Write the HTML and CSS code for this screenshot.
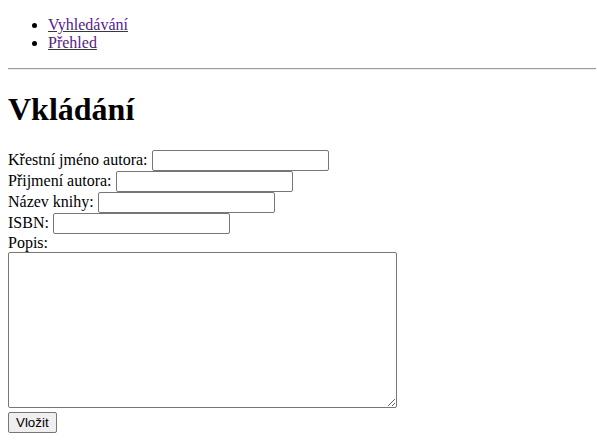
FILE: index.html
```html
<!DOCTYPE html>
<html lang="cs">
<head>
<meta charset="utf-8">
<title>Vkládání</title>
<link rel="stylesheet" href="styles.css">
</head>
<body>
<ul class="nav">
<li><a href="#">Vyhledávání</a></li>
<li><a href="#">Přehled</a></li>
</ul>
<hr class="sep">
<h1 class="title">Vkládání</h1>
<form class="form">
<label>Křestní jméno autora: <input class="field" type="text"></label><br>
<label>Přijmení autora: <input class="field" type="text"></label><br>
<label>Název knihy: <input class="field" type="text"></label><br>
<label>ISBN: <input class="field" type="text"></label><br>
<label>Popis:<br><textarea class="desc"></textarea></label><br>
<button class="submit" type="button">Vložit</button>
</form>
</body>
</html>
```

FILE: styles.css
```css
body {
  margin: 0 1px 8px 8px;
  font-family: "Liberation Serif", "Times New Roman", serif;
  font-size: 16px;
  color: #000;
  background: #fff;
}
.nav {
  margin: 16px 0;
}
.nav a {
  color: #551a8b;
}
.sep {
  border: 0;
  border-top: 1px solid #9a9a9a;
  border-bottom: 1px solid #eeeeee;
  margin: 8px 0;
}
.title {
  font-size: 2em;
  margin: 0.67em 0;
}
.field {
  box-sizing: border-box;
  width: 177px;
  height: 21px;
  font-family: "Liberation Sans", Arial, sans-serif;
  font-size: 13.33px;
  border: 1px solid #767676;
  border-radius: 2px;
  padding: 1px 2px;
  vertical-align: baseline;
}
.desc {
  box-sizing: border-box;
  width: 389px;
  height: 156px;
  font-family: "Liberation Mono", monospace;
  font-size: 13.33px;
  border: 1px solid #767676;
  border-radius: 2px;
  margin: 0;
}
.submit {
  box-sizing: border-box;
  height: 21px;
  font-family: "Liberation Sans", Arial, sans-serif;
  font-size: 13.33px;
  padding: 1px 7px;
  border: 1px solid #767676;
  border-radius: 2px;
  background: #efefef;
  color: #000;
}
```
